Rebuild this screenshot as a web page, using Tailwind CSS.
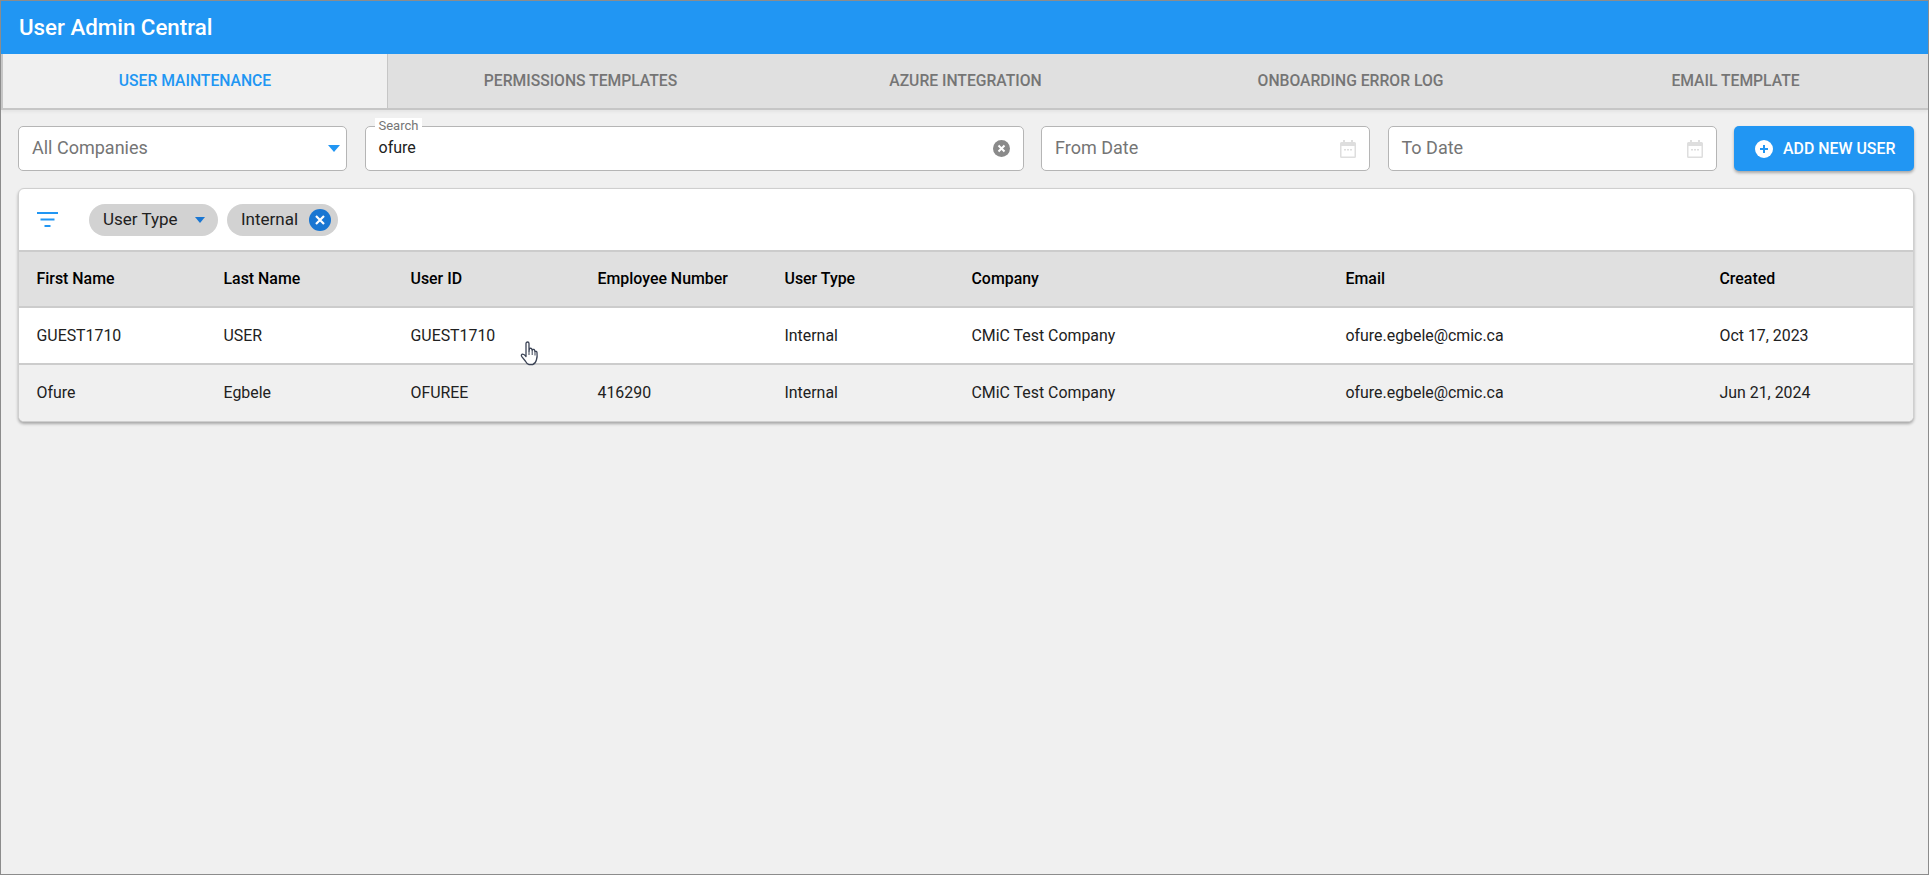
<!DOCTYPE html>
<html lang="en">
<head>
    <meta charset="UTF-8">
    <title>User Admin Central</title>
    <script src="https://cdn.jsdelivr.net/npm/@tailwindcss/browser@4"></script>
</head>
<body class="font-[Roboto,sans-serif] bg-[#f0f0f0]">
<div class="relative h-[875px] overflow-hidden border border-[#8c8c8c] bg-[#f0f0f0]">

    <header class="h-[53px] bg-[#2196f3] pl-[18px] flex items-center text-white text-[22.3px] font-medium">User Admin Central</header>

    <nav class="h-[56px] grid grid-cols-5 bg-[#e0e0e0] border-l-2 border-b-2 border-[#c6c6c6] text-[15.7px] font-medium text-[#757575] shadow-[0_2px_3px_rgba(0,0,0,0.05)]">
        <div class="flex items-center justify-center bg-[#f0f0f0] text-[#2196f3] border-r border-[#c6c6c6]">USER MAINTENANCE</div>
        <div class="flex items-center justify-center">PERMISSIONS TEMPLATES</div>
        <div class="flex items-center justify-center">AZURE INTEGRATION</div>
        <div class="flex items-center justify-center">ONBOARDING ERROR LOG</div>
        <div class="flex items-center justify-center">EMAIL TEMPLATE</div>
    </nav>

    <div class="flex gap-[17.5px] pl-[17px] pr-[14px] pt-[16px] h-[78px] text-[18px]">
        <div class="w-[329px] h-[45px] bg-white border border-[#b5b5b5] rounded-[5px] flex items-center justify-between pl-[13px] pr-[6px] text-[#757575]">
            <span class="-mt-[2px]">All Companies</span>
            <svg width="12" height="7" viewBox="0 0 12 7"><path d="M0 0h12L6 7z" fill="#2196f3"/></svg>
        </div>
        <div class="relative flex-1 h-[45px] bg-white border border-[#b5b5b5] rounded-[5px] flex items-center justify-between pl-[13px] pr-[13px] text-[#212121] text-[16px]">
            <span class="absolute -top-[9px] left-[9px] px-[4px] bg-white text-[13px] leading-[16px] text-[#757575]">Search</span>
            <span class="-mt-[1px]">ofure</span>
            <svg width="17" height="17" viewBox="0 0 17 17"><circle cx="8.5" cy="8.5" r="8.5" fill="#8a8a8a"/><path d="M5.5 5.500l6 6M11.500 5.500l-6 6" stroke="#fff" stroke-width="2"/></svg>
        </div>
        <div class="w-[329px] h-[45px] bg-white border border-[#b5b5b5] rounded-[5px] flex items-center justify-between pl-[13px] pr-[13px] text-[#757575]">
            <span class="-mt-[2px]">From Date</span>
            <svg width="16" height="18" viewBox="0 0 16 18"><path d="M3 0h2v2h6V0h2v2h1.500A1.500 1.500 0 0 1 16 3.500v13a1.500 1.500 0 0 1-1.500 1.500h-13A1.500 1.500 0 0 1 0 16.500v-13A1.500 1.500 0 0 1 1.500 2H3zM1.500 6v10.500h13V6z" fill="#dedede"/><path d="M4 9h2v1.500H4zM7 9h2v1.500H7zM10 9h2v1.500h-2z" fill="#dedede"/></svg>
        </div>
        <div class="w-[329px] h-[45px] bg-white border border-[#b5b5b5] rounded-[5px] flex items-center justify-between pl-[13px] pr-[13px] text-[#757575]">
            <span class="-mt-[2px]">To Date</span>
            <svg width="16" height="18" viewBox="0 0 16 18"><path d="M3 0h2v2h6V0h2v2h1.500A1.500 1.500 0 0 1 16 3.500v13a1.500 1.500 0 0 1-1.500 1.500h-13A1.500 1.500 0 0 1 0 16.500v-13A1.500 1.500 0 0 1 1.500 2H3zM1.500 6v10.500h13V6z" fill="#dedede"/><path d="M4 9h2v1.500H4zM7 9h2v1.500H7zM10 9h2v1.500h-2z" fill="#dedede"/></svg>
        </div>
        <button class="w-[180px] h-[45px] bg-[#2196f3] rounded-[5px] shadow-[0_2px_3px_rgba(0,0,0,0.3)] flex items-center pl-[21px] gap-[10px] text-white text-[15.9px] font-medium">
            <svg width="18" height="18" viewBox="0 0 18 18"><circle cx="9" cy="9" r="9" fill="#fff"/><path d="M9 5v8M5 9h8" stroke="#2196f3" stroke-width="2"/></svg>
            ADD NEW USER
        </button>
    </div>

    <section class="ml-[17px] mr-[14px] border border-[#cfcfcf] rounded-[6px] overflow-hidden bg-white shadow-[0_2px_3px_rgba(0,0,0,0.3)] text-[15.9px]">
        <div class="h-[63px] flex items-center pl-[18px] gap-[9px] border-b-2 border-[#cccccc] text-[17px]">
            <svg class="mr-[22px]" width="21" height="15" viewBox="0 0 21 15"><path d="M0 0h21v2H0zM3.500 6.500h14v2h-14zM7.500 13h6v2h-6z" fill="#2196f3"/></svg>
            <div class="h-[32px] w-[129px] rounded-full bg-[#d2d2d2] flex items-center justify-between pl-[14px] pr-[13px] text-[#212121]">
                User Type
                <svg width="10" height="6" viewBox="0 0 10 6"><path d="M0 0h10L5 6z" fill="#1976d2"/></svg>
            </div>
            <div class="h-[32px] w-[111px] rounded-full bg-[#d2d2d2] flex items-center justify-between pl-[14px] pr-[7px] text-[#212121]">
                Internal
                <svg width="22" height="22" viewBox="0 0 22 22"><circle cx="11" cy="11" r="11" fill="#1976d2"/><path d="M7 7l8 8M15 7l-8 8" stroke="#fff" stroke-width="2.200"/></svg>
            </div>
        </div>

        <div class="h-[56px] pl-[17.5px] bg-[#e0e0e0] border-b-2 border-[#cccccc] items-center grid grid-cols-[187px_187px_187px_187px_187px_374px_374px_1fr] font-medium text-black">
            <div>First Name</div><div>Last Name</div><div>User ID</div><div>Employee Number</div><div>User Type</div><div>Company</div><div>Email</div><div>Created</div>
        </div>
        <div class="h-[57px] pl-[17.5px] bg-white border-b-2 border-[#cccccc] items-center grid grid-cols-[187px_187px_187px_187px_187px_374px_374px_1fr] text-[#212121]">
            <div>GUEST1710</div><div>USER</div><div>GUEST1710</div><div></div><div>Internal</div><div>CMiC Test Company</div><div>ofure.egbele@cmic.ca</div><div>Oct 17, 2023</div>
        </div>
        <div class="h-[56px] pl-[17.5px] bg-[#f0f0f0] items-center grid grid-cols-[187px_187px_187px_187px_187px_374px_374px_1fr] text-[#212121]">
            <div>Ofure</div><div>Egbele</div><div>OFUREE</div><div>416290</div><div>Internal</div><div>CMiC Test Company</div><div>ofure.egbele@cmic.ca</div><div>Jun 21, 2024</div>
        </div>
    </section>

    <!-- mouse pointer -->
    <svg class="absolute left-[519px] top-[340px]" width="20" height="26" viewBox="0 0 20 26"><path d="M6 2.500a1.500 1.500 0 0 1 3 0V10l.5-2.500c1.300-.6 2.200 0 2.400 1l.3 1 .3-1c.9-.5 1.900 0 2.100 1l.3 1c.8-.5 1.900-.1 2.100 1 .3 2.500.2 5-.6 7.500-.6 2.300-1.800 4-3.700 4.500H9c-1.600-.4-2.800-1.700-3.700-3.500L1.600 15.300c-.6-1 0-2 1-2.100 1.300-.1 2.400 1 3.400 2.300z" fill="#fff" stroke="#3c4456" stroke-width="1.300" stroke-linejoin="round"/><path d="M9 10v4M12.200 10v4M15 11v3.500" stroke="#3c4456" stroke-width="1"/></svg>
</div>
</body>
</html>
